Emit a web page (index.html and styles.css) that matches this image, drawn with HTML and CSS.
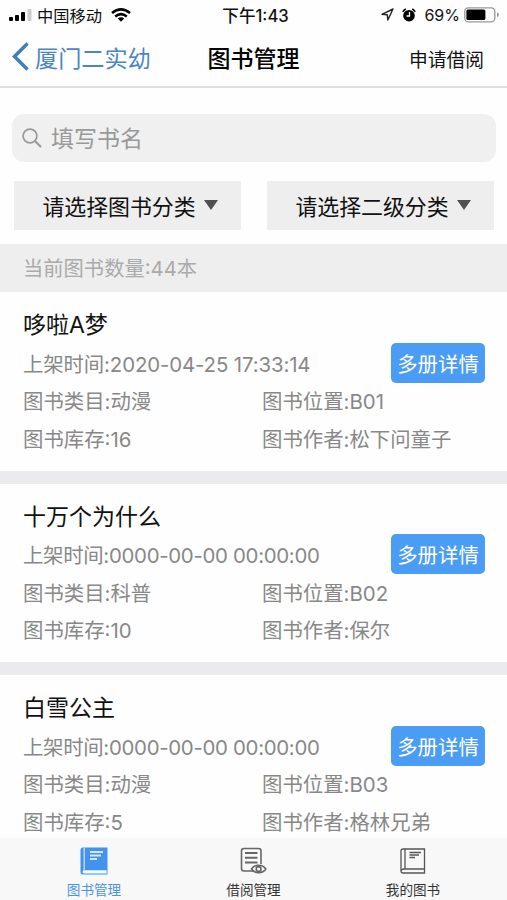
FILE: index.html
```html
<!DOCTYPE html>
<html lang="zh-CN">
<head>
<meta charset="utf-8">
<title>图书管理</title>
<link rel="stylesheet" href="styles.css">
</head>
<body>
<div class="app">
  <header class="status">
    <div class="status-left">
      <svg width="23" height="14" viewBox="0 0 23 14"><rect x="0" y="9" width="4" height="4" rx="1"/><rect x="6" y="7" width="4" height="6" rx="1"/><rect x="12" y="4" width="4" height="9" rx="1"/><rect x="18.5" y="1" width="4" height="12" rx="1" fill="#ccc"/></svg>
      <span class="carrier">中国移动</span>
      <svg class="wifi" width="20" height="14" viewBox="0 0 20 14" fill="none" stroke="#000" stroke-width="2.5"><path d="M1 5Q10-2.2 19 5M4.2 8.5Q10 3.8 15.8 8.5"/><path d="M6.8 10.4Q10 8 13.2 10.4L10 13.8Z" fill="#000" stroke="none"/></svg>
    </div>
    <span class="clock">下午1:43</span>
    <div class="status-right">
      <svg width="13" height="13" viewBox="0 0 13 13" fill="none" stroke="#222" stroke-width="1.4" stroke-linejoin="round"><path d="M12 1 1 6.3 6.3 6.8 6.8 12Z"/></svg>
      <svg class="alarm" width="14" height="14" viewBox="0 0 14 14"><circle cx="7" cy="7.7" r="5.8"/><path d="M.8 3.8A8 8 0 0 1 3.8 1M10.2 1A8 8 0 0 1 13.2 3.8" fill="none" stroke="#000" stroke-width="1.5"/><path d="M7.5 4V8H4.5" fill="none" stroke="#fff" stroke-width="1.3"/></svg>
      <span class="percent">69%</span>
      <svg class="battery" width="36" height="16" viewBox="0 0 36 16"><rect x=".8" y=".8" width="30" height="14" rx="3.5" fill="#fff" stroke="#999" stroke-width="1.3"/><rect x="2.4" y="2.5" width="19" height="10.6" rx="1.5"/><path d="M33 5.5Q35 6 35 7.8T33 10Z" fill="#999"/></svg>
    </div>
  </header>
  <nav class="nav">
    <a class="back"><svg width="17" height="29" viewBox="0 0 17 29" fill="none" stroke="#3d7fc1" stroke-width="3.5"><path d="M15.5 1.5 2.5 14.5 15.5 27.5"/></svg><span>厦门二实幼</span></a>
    <h1>图书管理</h1>
    <a class="apply">申请借阅</a>
  </nav>
  <main class="content">
    <div class="search"><svg width="20" height="20" viewBox="0 0 20 20" fill="none" stroke="#999" stroke-width="1.7"><circle cx="8" cy="8" r="6.9"/><path d="m13 13 6 6" stroke-width="2.2"/></svg><span>填写书名</span></div>
    <div class="filters">
      <div class="select"><span>请选择图书分类</span><i class="caret"></i></div>
      <div class="select"><span>请选择二级分类</span><i class="caret"></i></div>
    </div>
    <div class="count">当前图书数量:44本</div>
    <section class="card">
      <h2>哆啦A梦</h2>
      <div class="row"><span class="date">上架时间:2020-04-25 17:33:14</span><button class="detail">多册详情</button></div>
      <div class="row pair"><span>图书类目:动漫</span><span>图书位置:B01</span></div>
      <div class="row pair"><span>图书库存:16</span><span>图书作者:松下问童子</span></div>
    </section>
    <section class="card">
      <h2>十万个为什么</h2>
      <div class="row"><span class="date empty">上架时间:0000-00-00 00:00:00</span><button class="detail">多册详情</button></div>
      <div class="row pair"><span>图书类目:科普</span><span>图书位置:B02</span></div>
      <div class="row pair"><span>图书库存:10</span><span>图书作者:保尔</span></div>
    </section>
    <section class="card">
      <h2>白雪公主</h2>
      <div class="row"><span class="date empty">上架时间:0000-00-00 00:00:00</span><button class="detail">多册详情</button></div>
      <div class="row pair"><span>图书类目:动漫</span><span>图书位置:B03</span></div>
      <div class="row pair"><span>图书库存:5</span><span>图书作者:格林兄弟</span></div>
    </section>
  </main>
  <footer class="tabs">
    <a class="tab active"><svg width="28" height="28" viewBox="0 0 28 28"><path d="M3 .5H27.5V27.5H3Q.5 27.5.5 25V3Q.5.5 3 .5Z" fill="#4392ec"/><path d="M4.2 1V23" stroke="#c5dffb" stroke-width="1.3"/><path d="M3.3 23.3H26.6V26.5H3.3Q1.6 25 3.3 23.3Z" fill="#f4f9ff"/><path d="M10 5H23M10 8.5H21M10 12H17" stroke="#d5e8ff" stroke-width="1.8"/></svg><span>图书管理</span></a>
    <a class="tab"><svg width="28" height="28" viewBox="0 0 28 28" fill="none" stroke="#666" stroke-width="1.6"><path d="M13 24H4Q1.5 24 1.5 21.5V4Q1.5 1.5 4 1.5H18.5Q21 1.5 21 4V17"/><path d="M5 6H17.5M5 10.7H17.5M5 15.4H17.5" stroke-width="2"/><path d="M11.5 22Q14 18.3 18.7 18.3T25.8 22Q23.5 25.7 18.7 25.7T11.5 22Z" fill="#f8f8f8"/><circle cx="18.6" cy="22" r="2.4"/></svg><span>借阅管理</span></a>
    <a class="tab"><svg width="28" height="28" viewBox="0 0 28 28" fill="none" stroke="#555" stroke-width="1.3"><path d="M4 2H25.5V26H4Q2 26 2 24V4Q2 2 4 2ZM6 2V22M2.3 23.5Q3 22 5 22H25.5"/><path d="M10.5 5.5H22M10.5 8H20M10.5 10.5H16" stroke-width="1.7"/></svg><span>我的图书</span></a>
  </footer>
</div>
</body>
</html>
```
FILE: styles.css
```css
* { box-sizing: border-box; }
body { margin: 0; font-family: Inter, "Noto Sans CJK SC", sans-serif; color: #111; background: #fefefe; }
svg { display: block; flex: none; }
span, h1, h2, a { white-space: nowrap; }
.app { height: 900px; width: 507px; display: flex; flex-direction: column; overflow: hidden; }
.status { height: 29px; display: grid; grid-template-columns: 1fr auto 1fr; align-items: center; padding: 0 7px 0 9px; font-size: 16.3px; flex: none; }
.status-left, .status-right { display: flex; align-items: center; }
.status-right { justify-content: flex-end; }
.carrier { margin-left: 5px; }
.wifi { margin-left: 9px; }
.clock { font-weight: 500; font-size: 16.6px; padding-left: 2px; }
.alarm { margin-left: 8px; }
.percent { margin-left: 8px; font-size: 16px; }
.battery { margin-left: 4px; }
.nav { height: 59px; flex: none; display: grid; grid-template-columns: 1fr auto 1fr; align-items: center; padding: 0 23px 2px 12px; border-bottom: 2px solid #e0e0e0; }
.back { display: flex; align-items: center; gap: 6px; color: #4a86c5; font-size: 23.2px; }
h1 { margin: 0; padding-left: 11px; font-size: 23px; font-weight: 500; color: #000; }
.apply { justify-self: end; font-size: 18.8px; padding-top: 3px; }
.content { flex: 1; min-height: 0; overflow: hidden; }
.search { margin: 26px 11px 0 12px; height: 48px; border-radius: 12px; background: #f0f0f0; display: flex; align-items: center; gap: 9px; padding-left: 10px; color: #999; font-size: 23px; }
.search span { padding-bottom: 3px; }
.filters { display: grid; grid-template-columns: 1fr 1fr; gap: 26px; margin: 19px 13px 0 14px; }
.select { height: 49px; background: #eee; display: flex; align-items: center; justify-content: center; gap: 8px; padding: 0 0 1px 5px; font-size: 21.9px; }
.caret { border: 7.5px solid transparent; border-top: 10px solid #505050; border-bottom: 0; }
.count { margin-top: 14px; height: 48px; background: #eee; padding-left: 23px; line-height: 50px; font-size: 20.3px; color: #aaa; }
.card { height: 191.5px; border-bottom: 13.5px solid #ebebed; padding: 13px 22px 0 23px; color: #888; font-size: 20.4px; }
h2 { margin: 0; height: 39px; line-height: 41px; font-size: 23px; font-weight: 400; color: #111; }
.row { height: 37.6px; display: flex; align-items: center; justify-content: space-between; }
.date { letter-spacing: -.12px; }
.empty { letter-spacing: -.3px; }
.pair { display: grid; grid-template-columns: 239px 1fr; }
.detail { width: 94px; height: 40px; padding: 0; border: 0; border-radius: 5px; background: #4b9cf5; color: #fff; font: inherit; white-space: nowrap; }
.tabs { height: 62px; flex: none; background: #f8f8f8; display: grid; grid-template-columns: repeat(3, 159.5px); justify-content: center; }
.tab { display: flex; flex-direction: column; align-items: center; padding-top: 9px; gap: 5px; font-size: 13.6px; line-height: 21px; color: #333; }
.active { color: #4a94e8; }
```
